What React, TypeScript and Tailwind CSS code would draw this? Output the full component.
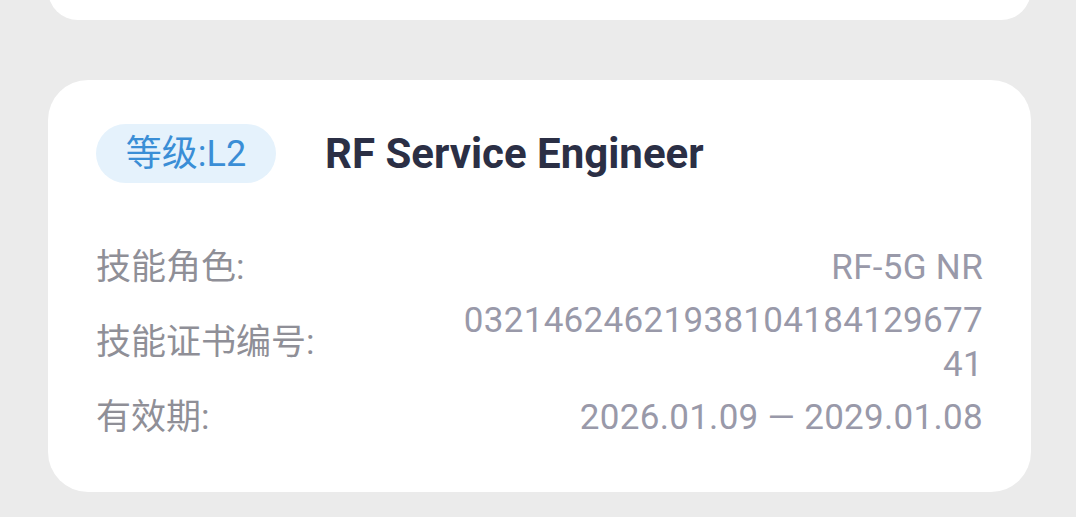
import React from 'react'

const rows = [
  { label: '技能角色:', value: 'RF-5G NR' },
  { label: '技能证书编号:', value: '0321462462193810418412967741' },
  { label: '有效期:', value: '2026.01.09 — 2029.01.08' },
]

export default function App() {
  return (
    <div
      className="w-[1076px] h-[517px] overflow-hidden bg-[#ebebeb] pl-12 pr-[45px]"
      style={{ fontFamily: "Roboto, 'Noto Sans CJK SC', sans-serif" }}
    >
      {/* previous card, scrolled off the top */}
      <div className="-mt-10 h-[60px] rounded-[40px] bg-white" />

      {/* ── Skill card ───────────────────────────────────────────── */}
      <div className="mt-[60px] rounded-[40px] bg-white px-12 pt-[44px] pb-[52px]">
        <div className="flex items-center gap-[49px]">
          <span className="flex h-[59px] w-[180px] items-center justify-center rounded-full bg-[#e5f2fc] text-[36px] text-[#3a8ed6]">
            等级:L2
          </span>
          <h1 className="text-[42px] font-bold leading-none text-[#2b2f45]">RF Service Engineer</h1>
        </div>

        <div className="mt-[63px] flex flex-col gap-[9px]">
          {rows.map(r => (
            <div key={r.label} className="flex items-center justify-between text-[35px] leading-[44px]">
              <span className="shrink-0 text-[#8f8f97]">{r.label}</span>
              <span className="w-[526px] break-all text-right tracking-[0.3px] text-[#9999a9]">{r.value}</span>
            </div>
          ))}
        </div>
      </div>
    </div>
  )
}
